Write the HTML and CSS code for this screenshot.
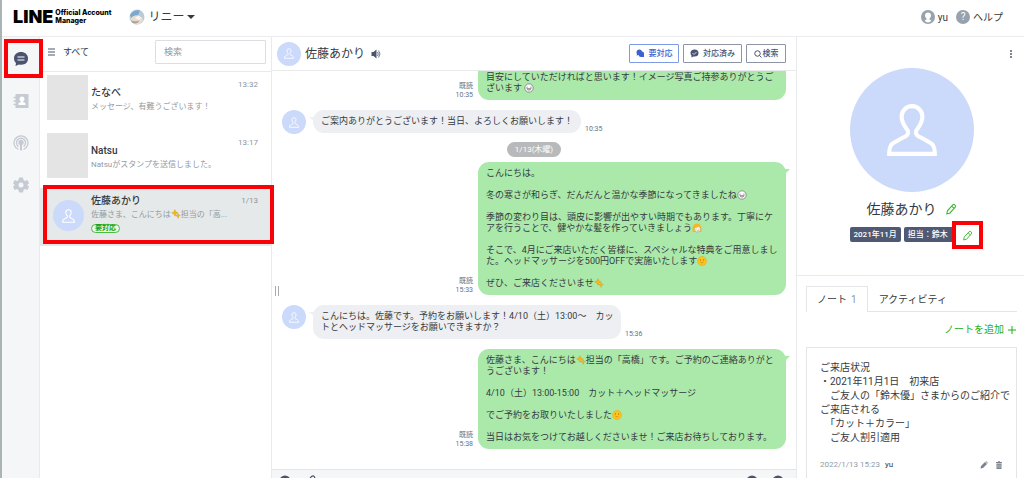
FILE: index.html
```html
<!DOCTYPE html>
<html lang="ja">
<head>
<meta charset="utf-8">
<meta name="viewport" content="width=device-width, initial-scale=1">
<title>LINE Official Account Manager</title>
<link rel="stylesheet" href="styles.css">
</head>
<body>
<svg class="defs" aria-hidden="true">
  <symbol id="person" viewBox="0 0 48 52"><path d="M20 27C18 23 14 20 14 13A10 10 0 0 1 34 13C34 20 30 23 28 27C27 31 30 32 34 34L41 38C45 40 46 43 46 49H2C2 43 3 40 7 38L14 34C18 32 21 31 20 27Z" fill="none" stroke="#fff" stroke-width="4"/></symbol>
  <symbol id="sparkle" viewBox="0 0 18 18"><path d="M7 1l2 4 4 2-4 2-2 4-2-4-4-2 4-2zM13 8l1 3 3 1-3 1-1 4-2-4-3-1 3-1z" fill="#f7b416" stroke="#c99b29" stroke-width=".6"/></symbol>
  <symbol id="grin" viewBox="0 0 18 18"><circle cx="9" cy="9" r="7.500" fill="#fff" stroke="#777" stroke-width="1.400"/><path d="M4 8q1.500-2 3 0M11 8q1.500-2 3 0" fill="none" stroke="#555"/><path d="M5 10h8q-1 3-4 3t-4-3z" fill="#e9b4b4" stroke="#666"/></symbol>
  <symbol id="smile" viewBox="0 0 18 18"><circle cx="9" cy="9" r="8" fill="#fbc51b" stroke="#eda41a"/><circle cx="6" cy="7" r="1" fill="#9a6412"/><circle cx="12" cy="7" r="1" fill="#9a6412"/><path d="M6 11q3 3 6 0" fill="none" stroke="#b77918"/></symbol>
  <symbol id="girl" viewBox="0 0 18 18"><path d="M1 16V9a8 8 0 0 1 16 0v7z" fill="#f8b91a"/><circle cx="10" cy="11" r="5.500" fill="#fff3e6" stroke="#a98"/><path d="M4 9q7 0 8-4 1 4 4 4V6Q9 0 4 5z" fill="#f8b91a"/><path d="M7 11h1M12 11h1M9 14h3" stroke="#865" fill="none"/></symbol>
  <symbol id="pencil" viewBox="0 0 20 20"><path d="M3 18l1-5L13 3q1.500-1.500 3 0l1 1q1.500 1.500 0 3L8 17zM11 5l4 4" fill="none" stroke="currentColor" stroke-width="1.700"/></symbol>
</svg>
<div class="app">
  <header class="top">
    <div class="logo"><strong class="logo-line">LINE</strong><span class="logo-sub">Official Account<br>Manager</span></div>
    <button class="account" type="button">
      <svg width="16" height="16" viewBox="0 0 32 32"><circle cx="16" cy="16" r="15" fill="#b7cbd9"/><path d="M2 12Q10 0 22 3L18 12Q9 12 5 18z" fill="#7ca7cf"/><path d="M3 19q8-9 18-4 8 4 7 8-5 8-13 8T3 19z" fill="#e9ddd0"/><path d="M12 18l7-5 7 5-7 4z" fill="#f9f5ed"/><path d="M4 23q9 3 17 0-3 6-9 6t-8-6z" fill="#a9a69c"/></svg>
      <span>リニー</span><i class="caret"></i>
    </button>
    <nav class="user">
      <a href="#" class="user-link"><svg width="14" height="14" viewBox="0 0 28 28"><circle cx="14" cy="14" r="14" fill="#97a2ac"/><path d="M14 5a6 6 0 0 0-6 6q0 4 3 6v2l-4 2q3 4 7 4t7-4l-4-2v-2q3-2 3-6a6 6 0 0 0-6-6z" fill="#fff"/></svg>yu</a>
      <a href="#" class="user-link"><span class="help">?</span>ヘルプ</a>
    </nav>
  </header>
  <div class="body">
    <nav class="rail">
      <a href="#" class="rail-item marked" aria-label="チャット"><svg width="16" height="16" viewBox="0 0 32 32"><path d="M16 2C8 2 2 7 2 15c0 4 2 7 4 9l-1 6 7-3c12 2 18-4 18-12S24 2 16 2z" fill="#4a5470"/><path d="M9 12h14M9 18h14" stroke="#fff" stroke-width="2.400"/></svg></a>
      <a href="#" class="rail-item" aria-label="連絡先"><svg width="16" height="16" viewBox="0 0 32 32"><path d="M5 2h26v28H5z" fill="#c6cad3"/><path d="M1 9h5M1 16h5M1 23h5" stroke="#c6cad3" stroke-width="3"/><path d="M18 7a5 5 0 0 0-5 5q0 3 3 5v1l-5 2v4h14v-4l-5-2v-1q3-2 3-5a5 5 0 0 0-5-5z" fill="#fff"/></svg></a>
      <a href="#" class="rail-item" aria-label="配信"><svg width="16" height="16" viewBox="0 0 32 32" fill="none" stroke="#c6cad3" stroke-width="2.600"><path d="M11 29A14 14 0 1 1 21 29M11 23A9 9 0 1 1 21 23"/><circle cx="16" cy="15" r="4" fill="#c6cad3"/><path d="M16 17v14" stroke-width="4"/></svg></a>
      <a href="#" class="rail-item" aria-label="設定"><svg width="16" height="16" viewBox="0 0 32 32"><path d="M12 1h8l1 5 3 2 5-2 3 7-4 3 4 3-3 7-5-2-3 2-1 5h-8l-1-5-3-2-5 2-3-7 4-3-4-3 3-7 5 2 3-2z" fill="#c6cad3"/><circle cx="16" cy="16" r="5" fill="#f5f6f8"/></svg></a>
    </nav>
    <section class="list">
      <div class="list-head">
        <button type="button" class="filter"><svg width="7" height="8" viewBox="0 0 7 8"><path d="M0 1h7M0 4h7M0 7h7" stroke="#4a5470"/></svg>すべて</button>
        <input class="search" type="text" placeholder="検索" aria-label="検索">
      </div>
      <a href="#" class="item"><span class="thumb"></span><span class="item-text"><b class="item-name">たなべ</b><span class="item-msg">メッセージ、有難うございます！</span></span><time>13:32</time></a>
      <a href="#" class="item"><span class="thumb"></span><span class="item-text"><b class="item-name">Natsu</b><span class="item-msg">Natsuがスタンプを送信しました。</span></span><time>13:17</time></a>
      <a href="#" class="item selected"><span class="thumb-slot"><span class="avatar avatar-m"><svg><use href="#person"/></svg></span></span><span class="item-text"><b class="item-name">佐藤あかり</b><span class="item-msg">佐藤さま、こんにちは<svg class="emoji"><use href="#sparkle"/></svg>担当の「高...</span><span class="badge">要対応</span></span><time>1/13</time></a>
    </section>
    <main class="chat">
      <div class="chat-head">
        <span class="avatar avatar-s"><svg><use href="#person"/></svg></span>
        <h1 class="chat-name">佐藤あかり</h1>
        <svg width="10" height="10" viewBox="0 0 20 20"><path d="M1 6h4l6-5v18l-6-5H1z" fill="#4a5470"/><path d="M13 6q3 4 0 8M15 3q6 7 0 14" fill="none" stroke="#4a5470" stroke-width="1.600"/></svg>
        <div class="actions">
          <button type="button" class="act act-blue"><svg width="9" height="9" viewBox="0 0 18 18"><path d="M7 1a6 6 0 0 0-6 6q0 2 1 3l-1 3 4-1q1 4 5 4h6V9q0-4-4-4-1-4-5-4z" fill="#3a63d0"/></svg>要対応</button>
          <button type="button" class="act act-done"><svg width="9" height="9" viewBox="0 0 18 18"><path d="M9 1C4 1 1 4 1 8q0 3 2 5v4l4-2q10 1 10-7 0-7-8-7z" fill="#4a5470"/><path d="M5 8l3 3 5-5" fill="none" stroke="#fff" stroke-width="1.500"/></svg>対応済み</button>
          <button type="button" class="act act-find"><svg width="8" height="8" viewBox="0 0 16 16" fill="none" stroke="#4a5470" stroke-width="2"><circle cx="7" cy="7" r="5.500"/><path d="M11 11l4 4"/></svg>検索</button>
        </div>
      </div>
      <div class="log">
        <div class="row out"><div class="meta">既読<br>10:35</div><div class="bubble cut">目安にしていただければと思います！イメージ写真ご持参ありがとうご<br>ざいます <svg class="emoji"><use href="#grin"/></svg></div></div>
        <div class="row"><span class="avatar avatar-s"><svg><use href="#person"/></svg></span><div class="bubble tail">ご案内ありがとうございます！当日、よろしくお願いします！</div><div class="meta">10:35</div></div>
        <div class="day">1/13(木曜)</div>
        <div class="row out"><div class="meta">既読<br>15:33</div><div class="bubble tail">こんにちは。<br><br>冬の寒さが和らぎ、だんだんと温かな季節になってきましたね<svg class="emoji"><use href="#grin"/></svg><br><br>季節の変わり目は、頭皮に影響が出やすい時期でもあります。丁寧にケ<br>アを行うことで、健やかな髪を作っていきましょう<svg class="emoji"><use href="#girl"/></svg><br><br>そこで、4月にご来店いただく皆様に、スペシャルな特典をご用意しまし<br>た。ヘッドマッサージを500円OFFで実施いたします<svg class="emoji"><use href="#smile"/></svg><br><br>ぜひ、ご来店くださいませ<svg class="emoji"><use href="#sparkle"/></svg></div></div>
        <div class="row"><span class="avatar avatar-s"><svg><use href="#person"/></svg></span><div class="bubble wide tail">こんにちは。佐藤です。予約をお願いします！4/10（土）13:00〜　カッ<br>トとヘッドマッサージをお願いできますか？</div><div class="meta">15:36</div></div>
        <div class="row out"><div class="meta">既読<br>15:38</div><div class="bubble tail">佐藤さま、こんにちは<svg class="emoji"><use href="#sparkle"/></svg>担当の「高橋」です。ご予約のご連絡ありがと<br>うございます！<br><br>4/10（土）13:00-15:00　カット＋ヘッドマッサージ<br><br>でご予約をお取りいたしました<svg class="emoji"><use href="#smile"/></svg><br><br>当日はお気をつけてお越しくださいませ！ご来店お待ちしております。</div></div>
        <i class="grip"></i>
      </div>
      <div class="composer">
        <svg width="12" height="12" viewBox="0 0 24 24"><circle cx="12" cy="12" r="11" fill="#4a5470"/></svg>
        <svg width="12" height="12" viewBox="0 0 24 24"><path d="M6 12l7-9q4-3 6 1t-2 7l-7 9" fill="none" stroke="#4a5470" stroke-width="2.400"/></svg>
        <svg class="push" width="12" height="12" viewBox="0 0 24 24"><circle cx="12" cy="12" r="11" fill="#4a5470"/></svg>
        <svg width="12" height="12" viewBox="0 0 24 24"><circle cx="12" cy="12" r="11" fill="#4a5470"/></svg>
      </div>
    </main>
    <aside class="side">
      <div class="profile">
        <button type="button" class="more" aria-label="メニュー"><svg width="2" height="8" viewBox="0 0 2 8"><path d="M0 0h2v2H0zM0 3h2v2H0zM0 6h2v2H0z" fill="#7f8791"/></svg></button>
        <span class="avatar avatar-xl"><svg><use href="#person"/></svg></span>
        <div class="name-row"><h2 class="name">佐藤あかり</h2><button type="button" class="edit" aria-label="名前を編集"><svg width="12" height="12"><use href="#pencil"/></svg></button></div>
        <div class="tags"><span class="tag">2021年11月</span><span class="tag tag-last">担当：鈴木</span><button type="button" class="edit edit-tags" aria-label="タグを編集"><svg width="11" height="11"><use href="#pencil"/></svg></button></div>
      </div>
      <div class="notes">
        <div class="tabs"><button type="button" class="tab active">ノート<span class="count">1</span></button><button type="button" class="tab">アクティビティ</button></div>
        <button type="button" class="add">ノートを追加<svg width="8" height="8" viewBox="0 0 8 8"><path d="M4 0v8M0 4h8" stroke="#1fae16"/></svg></button>
        <article class="note">
          <p class="note-text">ご来店状況<br>・2021年11月1日　初来店<br>　ご友人の「鈴木優」さまからのご紹介で<br>ご来店される<br>　「カット＋カラー」<br>　ご友人割引適用</p>
          <footer class="note-foot"><time>2022/1/13 15:23</time><span class="author">yu</span>
            <button type="button" class="edit gray" aria-label="編集"><svg width="8" height="8" viewBox="0 0 16 16"><path d="M1 15l1-5 8-8 4 4-8 8zM11 1l1-1 4 4-1 1z" fill="#7b828d"/></svg></button>
            <button type="button" class="edit gray" aria-label="削除"><svg width="8" height="8" viewBox="0 0 16 16"><path d="M2 2h4l1-2h2l1 2h4v2H2zM3 5h10v11H3z" fill="#7b828d"/><path d="M6 7v7M10 7v7" stroke="#fff"/></svg></button>
          </footer>
        </article>
      </div>
    </aside>
  </div>
</div>
</body>
</html>
```
FILE: styles.css
```css
* { box-sizing: border-box; }
body { margin: 0; font-family: Roboto, "Noto Sans CJK JP", sans-serif; font-size: 9px; line-height: 11px; color: #353a40; background: #fff; }
button { margin: 0; padding: 0; border: 0; background: none; font: inherit; color: inherit; cursor: pointer; display: flex; align-items: center; }
a { color: inherit; text-decoration: none; }
h1, h2, p { margin: 0; font-weight: 400; }
svg { display: block; flex: none; }
.defs { position: absolute; width: 0; height: 0; }
.app { height: 100vh; display: flex; flex-direction: column; overflow: hidden; border-left: 2px solid #a9b5b5; }
.top { flex: none; height: 37px; padding: 0 21px 2px 11px; display: flex; align-items: center; border-bottom: 1px solid #ececee; }
.logo { display: flex; align-items: center; gap: 2px; color: #000; font-family: Inter, sans-serif; }
.logo-line { font-size: 18px; line-height: 18px; font-weight: 900; }
.logo-sub { font-size: 7px; line-height: 8px; font-weight: 800; }
.account { margin-left: 18px; gap: 3px; font-size: 12px; line-height: 16px; }
.caret { border: 4px solid transparent; border-top-color: #353a40; border-bottom: 0; }
.user { margin-left: auto; display: flex; gap: 8px; font-size: 10px; }
.user-link { display: flex; align-items: center; gap: 3px; }
.help { width: 14px; height: 14px; border-radius: 50%; background: #97a2ac; color: #fff; text-align: center; line-height: 14px; }
.body { flex: 1; min-height: 0; display: grid; grid-template-columns: 38px 232px 1fr 228px; }

.rail { background: #f5f6f8; border-right: 1px solid #e9eaec; display: flex; flex-direction: column; }
.rail-item { position: relative; height: 42px; padding-top: 2px; display: flex; align-items: center; justify-content: center; }
.marked::after, .selected::after { content: ""; position: absolute; border: 4px solid #fa0007; z-index: 3; }
.marked::after { inset: 2px -4px 1px 2px; }

.list { border-right: 1px solid #e9eaec; }
.list-head { height: 35px; padding: 0 5px 4px 8px; display: flex; align-items: center; justify-content: space-between; border-bottom: 1px solid #e9eaec; }
.filter { gap: 8px; }
.search { width: 111px; height: 24px; padding: 0 8px; border: 1px solid #dcdfe2; border-radius: 1px; font: inherit; outline: 0; }
.search::placeholder { color: #8f979f; }
.item { position: relative; height: 58px; padding: 3px 13px 0 7px; display: flex; gap: 3px; }
.thumb, .thumb-slot { flex: none; width: 41px; height: 45px; }
.thumb { background: #e4e4e4; }
.thumb-slot { display: flex; justify-content: center; align-items: center; padding: 4px 0 0 2px; }
.item-text { flex: 1; min-width: 0; padding-top: 11px; display: flex; flex-direction: column; align-items: flex-start; white-space: nowrap; }
.item-name { font-size: 10px; line-height: 14px; font-weight: 500; }
.item-msg { font-size: 8px; line-height: 14px; color: #929ba3; }
.item time { font-size: 8px; color: #8b949c; padding-top: 4px; }
.selected { background: #e6e9e9; }
.selected::after { inset: -3px -3px 2px 3px; }
.selected .item-text { padding-top: 3px; }
.badge { margin-top: 2px; border: 1px solid #4cba43; border-radius: 5px; padding: 0 3px; background: #e9fbe7; color: #20a016; font-size: 7px; line-height: 7px; font-weight: 700; }

.avatar { flex: none; display: flex; align-items: center; justify-content: center; border-radius: 50%; background: #cbd9fb; }
.avatar-s { width: 24px; height: 24px; }
.avatar-s svg { width: 10px; height: 11px; }
.avatar-m { width: 31px; height: 31px; }
.avatar-m svg { width: 13px; height: 14px; }
.avatar-xl { width: 124px; height: 124px; }
.avatar-xl svg { width: 50px; height: 54px; }

.chat { min-width: 0; display: flex; flex-direction: column; }
.chat-head { flex: none; height: 34px; padding: 0 10px 0 5px; display: flex; align-items: center; gap: 4px; border-bottom: 1px solid #e9eaec; }
.chat-name { font-size: 12px; line-height: 16px; margin-right: 2px; }
.actions { margin-left: auto; display: flex; gap: 4px; }
.act { height: 19px; justify-content: center; gap: 4px; border: 1px solid #8d94a5; border-radius: 1px; font-size: 8px; font-weight: 500; color: #4a5470; }
.act-blue { width: 50px; border-color: #7d9be6; color: #3a63d0; }
.act-done { width: 59px; }
.act-find { width: 40px; gap: 1px; }
.log { position: relative; flex: 1; min-height: 0; overflow: hidden; padding: 0 10px; display: flex; flex-direction: column; gap: 10px; }
.row { flex: none; display: flex; align-items: flex-start; }
.out { justify-content: flex-end; }
.bubble { position: relative; padding: 6px 8px; border-radius: 11px; background: #edeff2; white-space: nowrap; }
.row .avatar + .bubble { margin-left: 7px; }
.wide, .out .bubble { width: 308px; }
.out .bubble { background: #aae9aa; }
.cut { padding-top: 1px; border-radius: 0 0 11px 11px; }
.tail::before { content: ""; position: absolute; top: 7px; left: -4px; border: 4px solid transparent; border-top-color: #edeff2; border-left-width: 5px; border-bottom-width: 0; }
.out .tail::before { left: auto; right: -4px; border-top-color: #aae9aa; }
.meta { align-self: flex-end; padding: 0 4px; font-size: 7px; line-height: 9px; color: #69717b; text-align: right; }
.out .meta { padding: 0 5px 0 0; }
.emoji { display: inline-block; width: 10px; height: 10px; vertical-align: -2px; }
.day { flex: none; align-self: center; padding: 0 8px; margin: -2px 0 -5px; border-radius: 8px; background: #b8b9ba; color: #fff; font-size: 8px; line-height: 15px; }
.grip { position: absolute; left: 3px; top: 54%; width: 4px; height: 10px; border: solid #a5abb3; border-width: 0 1px; }
.composer { flex: none; height: 9px; overflow: hidden; padding: 5px 12px 0 7px; display: flex; align-items: flex-start; gap: 14px; border-top: 1px solid #e1e4e8; background: #f5f6f8; }
.push { margin-left: auto; }

.side { min-width: 0; border-left: 1px solid #e9eaec; overflow: hidden; }
.profile { position: relative; height: 239px; padding: 31px 0 0 2px; display: flex; flex-direction: column; align-items: center; border-bottom: 1px solid #e9eaec; }
.more { position: absolute; right: 12px; top: 13px; }
.name-row { display: flex; align-items: center; gap: 8px; margin-top: 7px; }
.name { font-size: 14px; line-height: 20px; }
.edit { color: #34b62d; }
.tags { position: relative; width: 124px; display: flex; gap: 3px; margin-top: 8px; }
.tag { padding: 0 4px; border-radius: 2px; background: #4f5974; color: #fff; font-size: 8px; line-height: 15px; font-weight: 500; white-space: nowrap; }
.tag-last { flex: 1; }
.edit-tags { position: absolute; right: -9px; top: -6px; width: 31px; height: 28px; justify-content: center; border: 4px solid #fa0007; background: #fff; }
.notes { padding: 10px 7px 0 9px; font-size: 10px; }
.tabs { display: flex; border-bottom: 1px solid #e3e5e8; }
.tab { height: 25px; padding: 0 10px; border: 1px solid transparent; border-bottom: 0; white-space: nowrap; }
.active { border-color: #e3e5e8; background: #fff; margin-bottom: -1px; height: 26px; }
.count { margin-left: 4px; color: #8f979f; }
.add { margin: 10px 1px 0 auto; gap: 4px; line-height: 16px; color: #1fae16; }
.note { margin-top: 9px; height: 160px; padding: 13px; border: 1px solid #e3e5e8; }
.note-text { line-height: 14px; white-space: nowrap; }
.note-foot { display: flex; align-items: center; gap: 5px; margin-top: 14px; font-size: 8px; }
.note-foot time { color: #929ba3; }
.author { margin-right: auto; }
.gray { margin-left: 2px; }
```
